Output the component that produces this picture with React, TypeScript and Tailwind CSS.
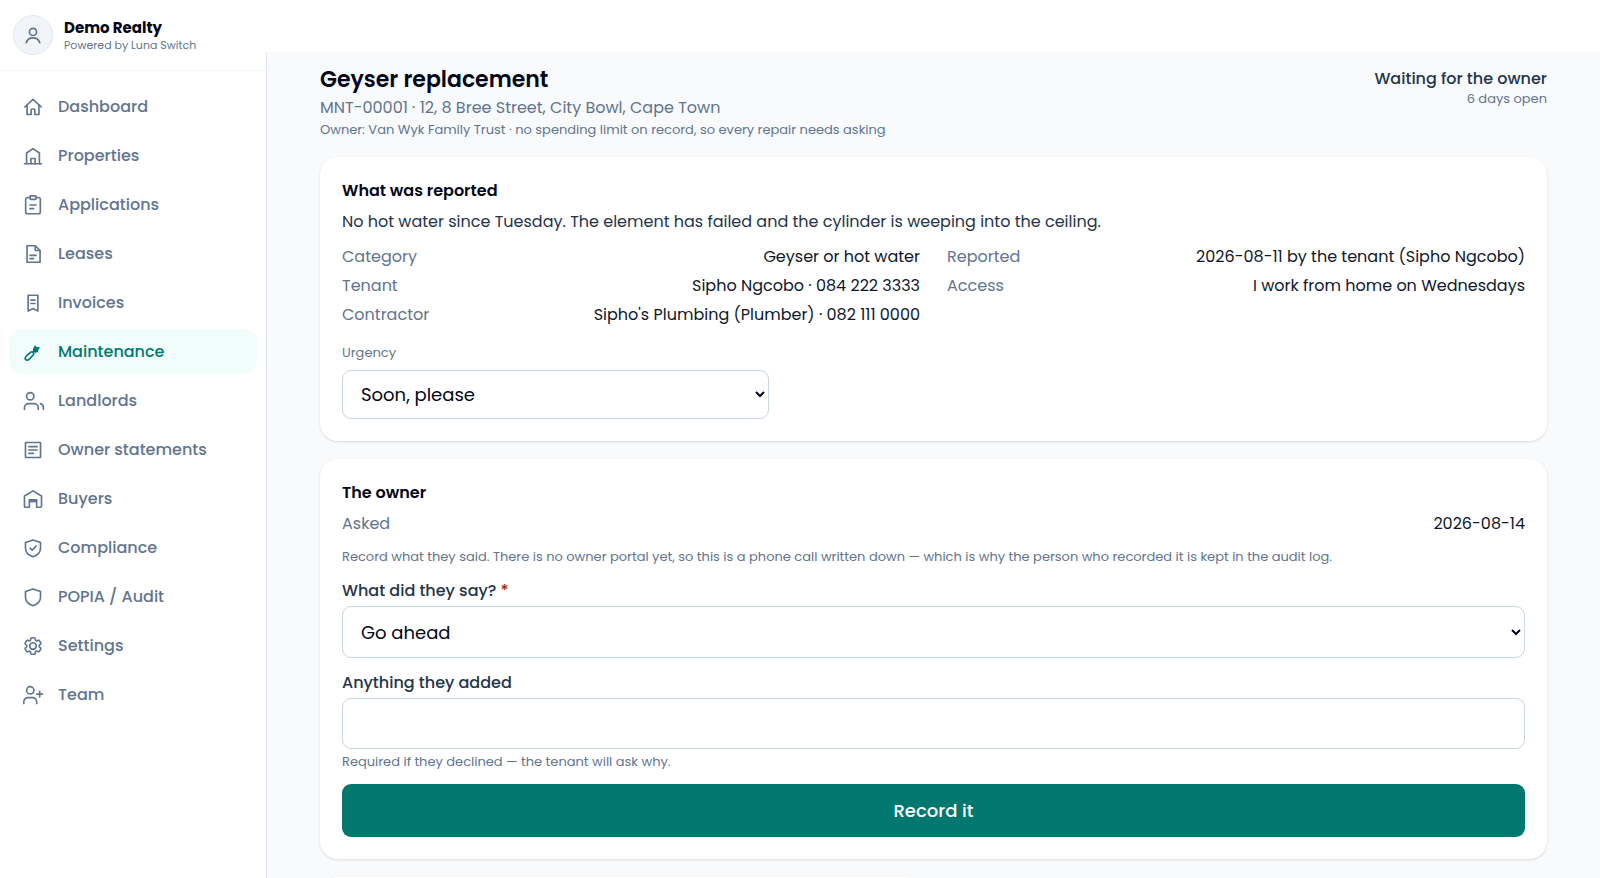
import React, { type ReactNode } from "react";

function Icon({ children }: { children: ReactNode }) {
  return (
    <svg
      viewBox="0 0 24 24"
      className="size-[22px] shrink-0 overflow-visible"
      fill="none"
      stroke="currentColor"
      strokeWidth={1.8}
      strokeLinecap="round"
      strokeLinejoin="round"
      aria-hidden="true"
    >
      {children}
    </svg>
  );
}

const SHIELD = "M12 3.2l8.2 2.9v6.1c0 4.5-3.2 7.6-8.2 9.3-5-1.7-8.2-4.8-8.2-9.3V6.1z";

const NAV: { label: string; icon: ReactNode; active?: boolean }[] = [
  {
    label: "Dashboard",
    icon: (
      <>
        <path d="M3 12 12 3.8 21 12" />
        <path d="M5.5 10v10.2H10v-5a1 1 0 0 1 1-1h2a1 1 0 0 1 1 1v5h4.5V10" />
      </>
    ),
  },
  {
    label: "Properties",
    icon: (
      <>
        <path d="M2.8 20.5h18.4" />
        <path d="M5 20.5V8.7l7-4.7 7 4.7v11.8" />
        <path d="M9.7 20.5v-5.8h4.6v5.8" />
      </>
    ),
  },
  {
    label: "Applications",
    icon: (
      <>
        <path d="M8.8 3.8H6a2 2 0 0 0-2 2v13.7a2 2 0 0 0 2 2h12a2 2 0 0 0 2-2V5.8a2 2 0 0 0-2-2h-2.8" />
        <rect x="8.8" y="2" width="6.4" height="3.8" rx=".8" />
        <path d="M8.7 12h6.6M8.7 16h4" />
      </>
    ),
  },
  {
    label: "Leases",
    icon: (
      <>
        <path d="M5.5 3h9l5.2 5.2V21H5.5z" />
        <path d="M14.5 3v5.2h5.2M8.7 13.5h6.6M8.7 17h4" />
      </>
    ),
  },
  {
    label: "Invoices",
    icon: (
      <>
        <path d="M6.7 3.5h10.6v17.3L12 18l-5.3 2.8z" />
        <path d="M9.7 8.8h4.6M9.7 12.5h4.6" />
      </>
    ),
  },
  {
    label: "Maintenance",
    active: true,
    icon: (
      <>
        <path d="M4.1 20.3c-.8-.8-.6-2.5.6-3.7l4.6-4.2c.9-.8 2.2-.9 3 0s.8 2-.1 2.9l-4.5 4.7c-1.2 1.2-2.8 1.1-3.6.3z" />
        <path d="M14.4 5.9l1.3 1.9 2.6-.3-1.7 2.5.1 1.4-2.3.6-1.8-1.9.6-2z" fill="currentColor" />
        <path d="M12 12.3l2-2" />
      </>
    ),
  },
  {
    label: "Landlords",
    icon: (
      <>
        <circle cx="9" cy="6.8" r="4" />
        <path d="M2.7 21.3v-2a4.5 4.5 0 0 1 4.5-4.5h6a4.5 4.5 0 0 1 4.5 4.5v2" />
        <path d="M20.3 14.9a4.2 4.2 0 0 1 3 4.2v2.2" />
      </>
    ),
  },
  {
    label: "Owner statements",
    icon: (
      <>
        <rect x="3.8" y="3.8" width="16.4" height="16.4" rx=".5" />
        <path d="M7.5 8.3h9M7.5 12h9M7.5 15.7h5" />
      </>
    ),
  },
  {
    label: "Buyers",
    icon: (
      <>
        <path d="M3.5 21a.8.8 0 0 1-.8-.8V8.7L12 3.1l9.3 5.6v11.5a.8.8 0 0 1-.8.8H16v-8H8v8z" />
        <path d="M8.5 13h7v2.2h-7z" fill="currentColor" strokeWidth={1} />
      </>
    ),
  },
  {
    label: "Compliance",
    icon: (
      <>
        <path d={SHIELD} />
        <path d="M8.8 12.2l2.3 2.2 4.2-4.5" />
      </>
    ),
  },
  { label: "POPIA / Audit", icon: <path d={SHIELD} /> },
  {
    label: "Settings",
    icon: (
      <>
        <path d="M9.594 3.94c.09-.542.56-.94 1.11-.94h2.593c.55 0 1.02.398 1.11.94l.213 1.281c.063.374.313.686.645.87.074.04.147.083.22.127.325.196.72.257 1.075.124l1.217-.456a1.125 1.125 0 0 1 1.37.49l1.296 2.247a1.125 1.125 0 0 1-.26 1.431l-1.003.827c-.293.241-.438.613-.43.992a7.723 7.723 0 0 1 0 .255c-.008.378.137.75.43.991l1.004.827c.424.35.534.955.26 1.43l-1.298 2.247a1.125 1.125 0 0 1-1.369.491l-1.217-.456c-.355-.133-.75-.072-1.076.124a6.47 6.47 0 0 1-.22.128c-.331.183-.581.495-.644.869l-.213 1.281c-.09.543-.56.94-1.11.94h-2.594c-.55 0-1.019-.398-1.11-.94l-.213-1.281c-.062-.374-.312-.686-.644-.87a6.52 6.52 0 0 1-.22-.127c-.325-.196-.72-.257-1.076-.124l-1.217.456a1.125 1.125 0 0 1-1.369-.49l-1.297-2.247a1.125 1.125 0 0 1 .26-1.431l1.004-.827c.292-.24.437-.613.43-.991a6.932 6.932 0 0 1 0-.255c.007-.38-.138-.751-.43-.992l-1.004-.827a1.125 1.125 0 0 1-.26-1.43l1.297-2.247a1.125 1.125 0 0 1 1.37-.491l1.216.456c.356.133.751.072 1.076-.124.072-.044.146-.086.22-.128.332-.183.582-.495.644-.869l.214-1.28Z" />
        <circle cx="12" cy="12" r="3.6" />
      </>
    ),
  },
  {
    label: "Team",
    icon: (
      <>
        <circle cx="9" cy="6.9" r="4" />
        <path d="M2 21.4v-2a4.5 4.5 0 0 1 4.5-4.5h5a4.5 4.5 0 0 1 4.5 4.5v2" />
        <path d="M19.3 7.9v6.2M16.2 11h6.2" />
      </>
    ),
  },
];

function Card({ title, children }: { title: string; children: ReactNode }) {
  return (
    <section className="rounded-[18px] bg-white p-[22px] shadow-sm">
      <h2 className="text-base/6 font-semibold text-slate-950">{title}</h2>
      {children}
    </section>
  );
}

function Fact({ term, children }: { term: string; children: ReactNode }) {
  return (
    <div className="flex justify-between gap-4 text-base/[22px]">
      <dt className="text-slate-500">{term}</dt>
      <dd className="text-right text-slate-900">{children}</dd>
    </div>
  );
}

export default function App() {
  return (
    <div className="flex h-screen overflow-hidden bg-white font-['Poppins',Inter,sans-serif] text-slate-900">
      <aside className="flex w-[266px] shrink-0 flex-col">
        <div className="flex h-[71px] shrink-0 items-center gap-[11px] border-b border-slate-100 px-[13px]">
          <span className="flex size-10 shrink-0 items-center justify-center rounded-full border border-slate-200 bg-slate-100 text-slate-500">
            <Icon>
              <circle cx="12" cy="8.6" r="3.9" />
              <path d="M4.6 20.4C5.7 17 8.7 15.1 12 15.1s6.3 1.9 7.4 5.3" />
            </Icon>
          </span>
          <div>
            <p className="text-[15px]/[20px] font-bold text-slate-950">Demo Realty</p>
            <p className="text-[11px]/[15px] text-slate-500">Powered by Luna Switch</p>
          </div>
        </div>
        <nav className="flex flex-col gap-1 px-[9px] py-[13px]">
          {NAV.map((item) => (
            <a
              key={item.label}
              href="#"
              aria-current={item.active ? "page" : undefined}
              className={
                item.active
                  ? "flex h-[45px] items-center gap-[14px] rounded-[14px] bg-teal-50 px-[13px] text-base font-medium text-teal-700"
                  : "flex h-[45px] items-center gap-[14px] rounded-[14px] px-[13px] text-base font-medium text-slate-500"
              }
            >
              <Icon>{item.icon}</Icon>
              {item.label}
            </a>
          ))}
        </nav>
      </aside>

      <div className="flex min-w-0 grow flex-col">
        <header className="h-[52px] shrink-0 bg-white" />
        <main className="grow border-l border-slate-200 bg-slate-50 px-6 pt-3">
          <div className="mx-auto flex max-w-[1227px] flex-col gap-[18px]">
            <div className="flex items-start justify-between gap-4">
              <div>
                <h1 className="text-[22px]/[31px] font-semibold text-slate-950">Geyser replacement</h1>
                <p className="mt-0.5 text-base/[22px] text-slate-500">
                  MNT-00001 · 12, 8 Bree Street, City Bowl, Cape Town
                </p>
                <p className="mt-0.5 text-[13px]/[18px] text-slate-500">
                  Owner: Van Wyk Family Trust · no spending limit on record, so every repair needs asking
                </p>
              </div>
              <div className="pt-1 text-right">
                <p className="text-base/[22px] font-medium text-[#24344a]">Waiting for the owner</p>
                <p className="text-[13px]/[18px] text-slate-500">6 days open</p>
              </div>
            </div>

            <Card title="What was reported">
              <p className="mt-2 text-base/[22px] text-[#24344a]">
                No hot water since Tuesday. The element has failed and the cylinder is weeping into the ceiling.
              </p>
              <dl className="mt-[13px] grid grid-cols-2 gap-x-[27px] gap-y-[7px]">
                <Fact term="Category">Geyser or hot water</Fact>
                <Fact term="Reported">2026-08-11 by the tenant (Sipho Ngcobo)</Fact>
                <Fact term="Tenant">Sipho Ngcobo · 084 222 3333</Fact>
                <Fact term="Access">I work from home on Wednesdays</Fact>
                <Fact term="Contractor">Sipho's Plumbing (Plumber) · 082 111 0000</Fact>
              </dl>
              <label htmlFor="urgency" className="mt-[18px] block text-[13px]/[18px] text-slate-500">
                Urgency
              </label>
              <select
                id="urgency"
                className="mt-2 block h-[49px] w-full max-w-[427px] rounded-[9px] border border-slate-300 bg-white px-[14px] text-lg text-slate-950"
              >
                <option>Soon, please</option>
              </select>
            </Card>

            <Card title="The owner">
              <dl className="mt-2">
                <Fact term="Asked">2026-08-14</Fact>
              </dl>
              <p className="mt-[13px] text-[13px]/[18px] text-slate-500">
                Record what they said. There is no owner portal yet, so this is a phone call written down — which is
                why the person who recorded it is kept in the audit log.
              </p>
              <label htmlFor="answer" className="mt-[14px] block text-base/[22px] font-medium text-[#24344a]">
                What did they say? <span className="text-orange-800">*</span>
              </label>
              <select
                id="answer"
                className="mt-1 block h-[52px] w-full rounded-[9px] border border-slate-300 bg-white px-[14px] text-lg text-slate-950"
              >
                <option>Go ahead</option>
              </select>
              <label htmlFor="note" className="mt-[14px] block text-base/[22px] font-medium text-[#24344a]">
                Anything they added
              </label>
              <input
                id="note"
                type="text"
                className="mt-1 block h-[51px] w-full rounded-[9px] border border-slate-300 bg-white px-[18px] text-lg text-slate-950"
              />
              <p className="mt-1 text-[13px]/[18px] text-slate-500">
                Required if they declined — the tenant will ask why.
              </p>
              <button
                type="button"
                className="mt-[13px] block h-[53px] w-full rounded-[9px] bg-teal-700 text-lg font-medium text-white"
              >
                Record it
              </button>
            </Card>

            <div className="grid grid-cols-2 gap-[18px]">
              <div className="h-40 rounded-[18px] bg-white shadow-sm" />
            </div>
          </div>
        </main>
      </div>
    </div>
  );
}
